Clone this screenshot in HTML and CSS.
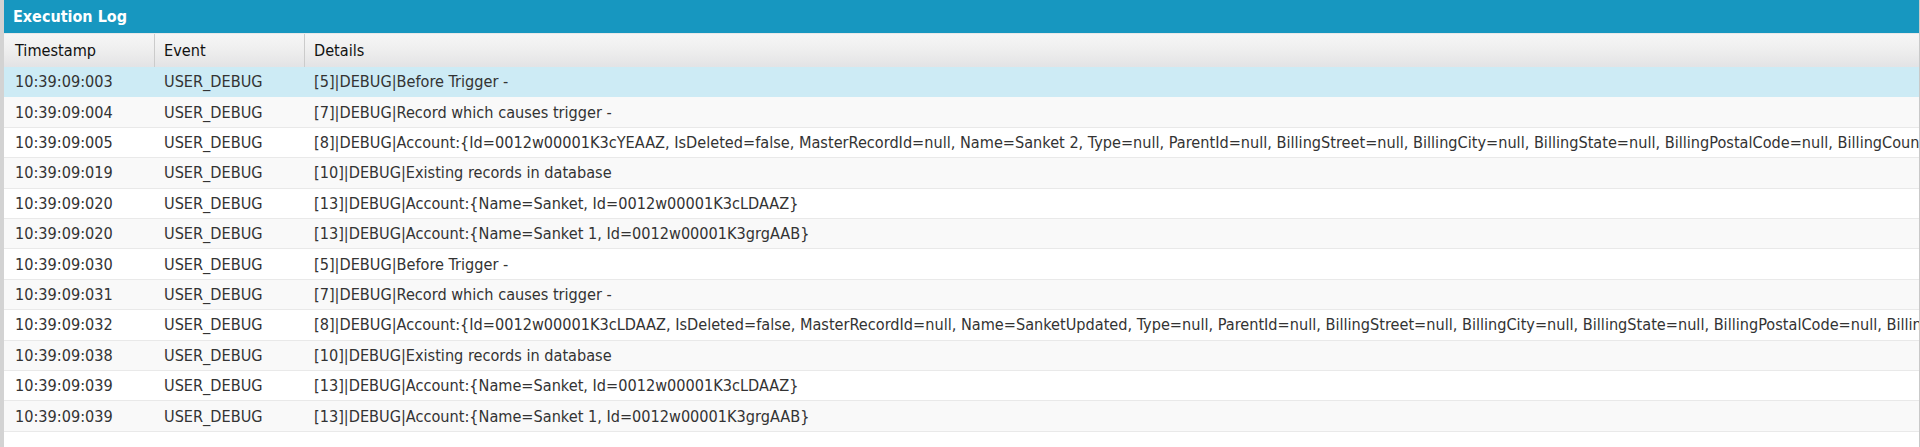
FILE: index.html
```html
<!DOCTYPE html>
<html>
<head>
<meta charset="utf-8">
<link rel="stylesheet" href="styles.css">
</head>
<body>
<div class="page">
  <div class="strip"></div>
  <div class="panel">
    <div class="title">Execution Log</div>
    <div class="grid">
      <div class="row head">
        <div class="cell c1">Timestamp</div>
        <div class="cell c2">Event</div>
        <div class="cell c3">Details</div>
      </div>
      <div class="row sel">
        <div class="cell c1">10:39:09:003</div>
        <div class="cell c2">USER_DEBUG</div>
        <div class="cell c3">[5]|DEBUG|Before Trigger -</div>
      </div>
      <div class="row alt">
        <div class="cell c1">10:39:09:004</div>
        <div class="cell c2">USER_DEBUG</div>
        <div class="cell c3">[7]|DEBUG|Record which causes trigger -</div>
      </div>
      <div class="row">
        <div class="cell c1">10:39:09:005</div>
        <div class="cell c2">USER_DEBUG</div>
        <div class="cell c3">[8]|DEBUG|Account:{Id=0012w00001K3cYEAAZ, IsDeleted=false, MasterRecordId=null, Name=Sanket 2, Type=null, ParentId=null, BillingStreet=null, BillingCity=null, BillingState=null, BillingPostalCode=null, BillingCountry=null, BillingLatitude=null}</div>
      </div>
      <div class="row alt">
        <div class="cell c1">10:39:09:019</div>
        <div class="cell c2">USER_DEBUG</div>
        <div class="cell c3">[10]|DEBUG|Existing records in database</div>
      </div>
      <div class="row">
        <div class="cell c1">10:39:09:020</div>
        <div class="cell c2">USER_DEBUG</div>
        <div class="cell c3">[13]|DEBUG|Account:{Name=Sanket, Id=0012w00001K3cLDAAZ}</div>
      </div>
      <div class="row alt">
        <div class="cell c1">10:39:09:020</div>
        <div class="cell c2">USER_DEBUG</div>
        <div class="cell c3">[13]|DEBUG|Account:{Name=Sanket 1, Id=0012w00001K3grgAAB}</div>
      </div>
      <div class="row">
        <div class="cell c1">10:39:09:030</div>
        <div class="cell c2">USER_DEBUG</div>
        <div class="cell c3">[5]|DEBUG|Before Trigger -</div>
      </div>
      <div class="row alt">
        <div class="cell c1">10:39:09:031</div>
        <div class="cell c2">USER_DEBUG</div>
        <div class="cell c3">[7]|DEBUG|Record which causes trigger -</div>
      </div>
      <div class="row">
        <div class="cell c1">10:39:09:032</div>
        <div class="cell c2">USER_DEBUG</div>
        <div class="cell c3">[8]|DEBUG|Account:{Id=0012w00001K3cLDAAZ, IsDeleted=false, MasterRecordId=null, Name=SanketUpdated, Type=null, ParentId=null, BillingStreet=null, BillingCity=null, BillingState=null, BillingPostalCode=null, BillingCountry=null, BillingLatitude=null}</div>
      </div>
      <div class="row alt">
        <div class="cell c1">10:39:09:038</div>
        <div class="cell c2">USER_DEBUG</div>
        <div class="cell c3">[10]|DEBUG|Existing records in database</div>
      </div>
      <div class="row">
        <div class="cell c1">10:39:09:039</div>
        <div class="cell c2">USER_DEBUG</div>
        <div class="cell c3">[13]|DEBUG|Account:{Name=Sanket, Id=0012w00001K3cLDAAZ}</div>
      </div>
      <div class="row alt">
        <div class="cell c1">10:39:09:039</div>
        <div class="cell c2">USER_DEBUG</div>
        <div class="cell c3">[13]|DEBUG|Account:{Name=Sanket 1, Id=0012w00001K3grgAAB}</div>
      </div>
    </div>
  </div>
</div>
</body>
</html>
```

FILE: styles.css
```css
html, body {
  margin: 0;
  padding: 0;
  background: #ffffff;
}

body {
  font-family: "DejaVu Sans Condensed", "DejaVu Sans", sans-serif;
  font-stretch: condensed;
  font-size: 16.15px;
  color: #333333;
}

.page {
  display: flex;
  height: 447px;
  width: 1920px;
  overflow: hidden;
}

.strip {
  width: 4px;
  flex: none;
  background: #d3d3d3;
}

.panel {
  flex: 1;
  min-width: 0;
  border-right: 1px solid #c9c9c9;
  overflow: hidden;
  background: #ffffff;
}

.title {
  height: 33px;
  box-sizing: border-box;
  background: #1797c0;
  color: #ffffff;
  font-weight: bold;
  font-size: 16px;
  padding-left: 9px;
  display: flex;
  align-items: center;
  white-space: nowrap;
}

.row {
  display: grid;
  grid-template-columns: 150px 150px 1fr;
  height: 30.42px;
  box-sizing: border-box;
  border-bottom: 1px solid #e9e9e9;
  background: #ffffff;
}

.row.alt {
  background: #f9f9f9;
}

.row.sel {
  background: #cdebf5;
  border-bottom-color: #cdebf5;
}

.row.head {
  height: 34px;
  border-top: 1px solid #e8e8e8;
  border-bottom: none;
  background: linear-gradient(to bottom, #f6f6f6 0%, #efefef 45%, #e3e3e5 100%);
  color: #111111;
}

.cell {
  display: flex;
  align-items: center;
  padding-left: 10px;
  white-space: nowrap;
  overflow: hidden;
  min-width: 0;
}

.cell.c1 {
  padding-left: 11px;
}

.head .cell.c2,
.head .cell.c3 {
  border-left: 1px solid #cbcbcb;
  padding-left: 9px;
}
```
